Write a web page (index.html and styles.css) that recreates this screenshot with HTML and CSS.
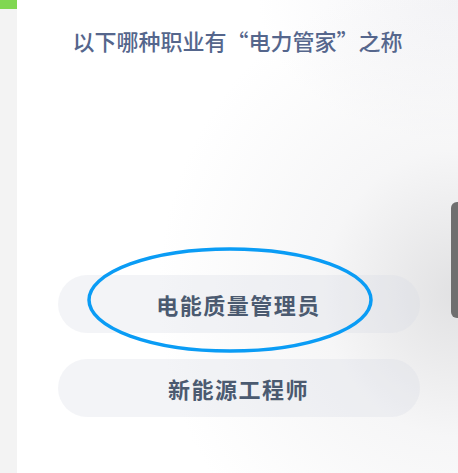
FILE: index.html
```html
<!DOCTYPE html>
<html lang="zh-CN">
<head>
  <meta charset="UTF-8" />
  <meta name="viewport" content="width=device-width, initial-scale=1" />
  <title>答题</title>
  <link rel="stylesheet" href="styles.css">
</head>
<body>
  <aside class="side">
    <div class="side-bar"></div>
  </aside>
  <main class="card">
    <h2 class="question">以下哪种职业有“电力管家”之称</h2>
    <div class="options">
      <div class="option option-marked">
        <span>电能质量管理员</span>
        <svg class="mark" width="290" height="108" viewBox="0 0 290 108">
          <ellipse cx="145" cy="54" rx="141" ry="51" fill="none" stroke="#0a9cf5" stroke-width="3.5" />
        </svg>
      </div>
      <div class="option"><span>新能源工程师</span></div>
    </div>
    <div class="handle"></div>
  </main>
</body>
</html>
```

FILE: styles.css
```css
html, body {
  height: 100%;
  margin: 0;
}
body {
  display: flex;
  font-family: "Noto Sans CJK SC", "Noto Sans", sans-serif;
  background: #f3f3f3;
  overflow: hidden;
}
.side {
  width: 17px;
  flex-shrink: 0;
}
.side-bar {
  height: 9px;
  background: #80d751;
}
.card {
  flex: 1;
  position: relative;
  display: flex;
  flex-direction: column;
  background:
    radial-gradient(ellipse 300px 320px at 100% 62%, rgba(215, 215, 217, 0.75), rgba(235, 235, 237, 0.45) 45%, rgba(255, 255, 255, 0) 100%),
    radial-gradient(ellipse 200px 140px at 100% 0%, rgba(235, 235, 240, 0.6), rgba(255, 255, 255, 0) 100%),
    #fff;
}
.question {
  margin: 0;
  padding-top: 25px;
  text-align: center;
  font-size: 22px;
  font-weight: 500;
  line-height: 30px;
  color: #55668c;
}
.options {
  margin-top: 220px;
  padding: 0 38px 0 41px;
  display: flex;
  flex-direction: column;
  gap: 26px;
}
.option {
  position: relative;
  height: 58px;
  border-radius: 29px;
  background: rgba(214, 220, 230, 0.3);
  display: flex;
  align-items: center;
  justify-content: center;
  font-size: 22px;
  font-weight: 700;
  letter-spacing: 1.5px;
  color: #4b5a70;
}
.option span {
  margin-right: 1px;
}
.mark {
  position: absolute;
  left: 27px;
  top: -29px;
}
.handle {
  position: absolute;
  right: 0;
  top: 202px;
  width: 7px;
  height: 116px;
  background: #6f6f6f;
  border-radius: 6px 0 0 6px;
}
```
